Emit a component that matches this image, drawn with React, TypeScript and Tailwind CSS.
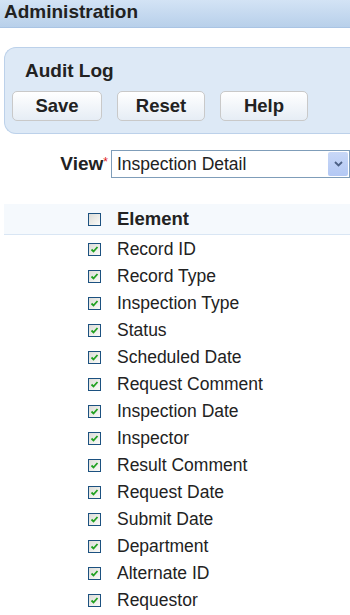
import React from "react";

const FIELDS = [
  "Record ID",
  "Record Type",
  "Inspection Type",
  "Status",
  "Scheduled Date",
  "Request Comment",
  "Inspection Date",
  "Inspector",
  "Result Comment",
  "Request Date",
  "Submit Date",
  "Department",
  "Alternate ID",
  "Requestor",
];

function Box({ checked }: { checked: boolean }) {
  return (
    <span className="flex h-[13px] w-[13px] items-center justify-center border border-[#1c5180] bg-gradient-to-br from-[#dcdcd7] to-[#fbfbf9]">
      {checked && (
        <svg width="9" height="9" viewBox="0 0 9 9">
          <path d="M1.5 4.5 L3.5 6.5 L7.5 2" fill="none" stroke="#21a121" strokeWidth="1.8" />
        </svg>
      )}
    </span>
  );
}

function Btn({ label, w }: { label: string; w: string }) {
  return (
    <button
      className={`${w} h-[30px] rounded-[5px] border border-[#c9c9c9] bg-gradient-to-b from-white to-[#e6edf5] text-[18.5px] font-bold text-[#222]`}
    >
      {label}
    </button>
  );
}

export default function App() {
  return (
    <div className="h-[615px] w-[350px] overflow-hidden bg-white font-['Liberation_Sans',Arial,sans-serif] text-[#222]">
      <div className="h-[28px] border-b border-[#a9c4e4] bg-gradient-to-b from-[#d3e3f5] to-[#b8d0ea] pl-[4px] text-[19px] font-bold leading-[24px] text-[#222]">
        Administration
      </div>

      <div className="ml-[4px] mt-[19px] h-[87px] rounded-l-[12px] border border-r-0 border-[#bcd1ea] bg-[#dde9f6] pl-[7px] pt-[12px]">
        <div className="pl-[13px] text-[19px] font-bold leading-[22px]">Audit Log</div>
        <div className="mt-[9px] flex gap-[15px]">
          <Btn label="Save" w="w-[90px]" />
          <Btn label="Reset" w="w-[88px]" />
          <Btn label="Help" w="w-[88px]" />
        </div>
      </div>

      <div className="mt-[16px] flex items-center">
        <div className="flex w-[111px] items-start justify-end pr-[3px]">
          <span className="text-[19px] font-bold leading-[22px]">View</span>
          <span className="mt-[3px] text-[12px] leading-none text-[#e02020]">*</span>
        </div>
        <div className="flex h-[28px] flex-1 items-center border border-[#7f9db9] pl-[5px]">
          <span className="flex-1 text-[17.5px]">Inspection Detail</span>
          <span className="mr-[1px] flex h-[24px] w-[20px] items-center justify-center rounded-[2px] bg-gradient-to-b from-[#c9d8f7] to-[#b3c8f4]">
            <svg width="9" height="6" viewBox="0 0 9 6">
              <path d="M1 1 L4.5 4.5 L8 1" fill="none" stroke="#4d6185" strokeWidth="1.8" />
            </svg>
          </span>
        </div>
      </div>

      <div className="ml-[4px] mt-[26px] flex h-[31px] items-center border-b border-[#d9e6f4] bg-[#f5f9fd] pl-[84px]">
        <Box checked={false} />
        <span className="ml-[16px] text-[18.5px] font-bold">Element</span>
      </div>

      <div className="pt-[1px]">
        {FIELDS.map((f) => (
          <div key={f} className="flex h-[27px] items-center pl-[88px]">
            <Box checked />
            <span className="ml-[16px] text-[17.5px]">{f}</span>
          </div>
        ))}
      </div>
    </div>
  );
}
